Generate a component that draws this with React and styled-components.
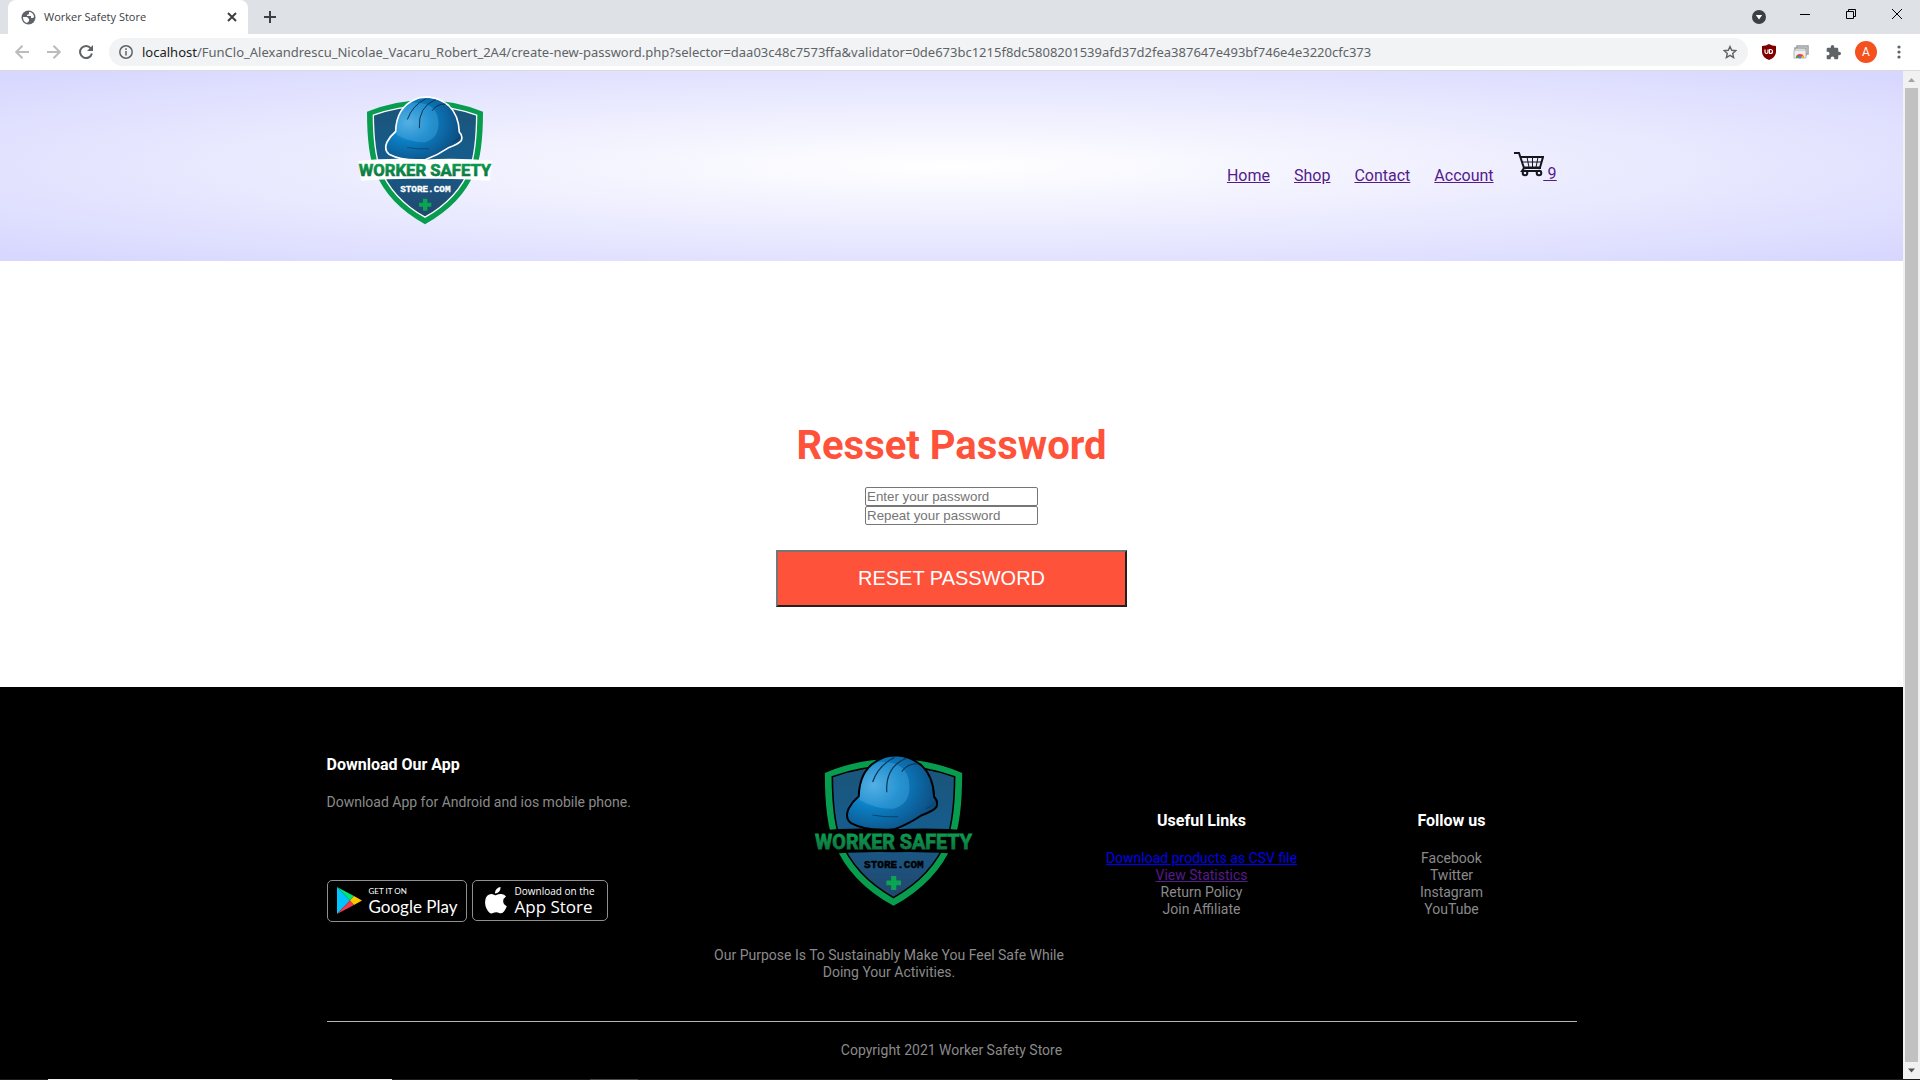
import React from "react";
import styled, { createGlobalStyle } from "styled-components";

const GlobalStyle = createGlobalStyle`
  * { box-sizing: border-box; margin: 0; padding: 0; }
  body { font-family: Roboto, "Liberation Sans", sans-serif; background: #fff; }
  ul { list-style: none; }
  svg { display: block; flex: none; }
`;

const Window = styled.div`
  min-height: 100vh;
  display: flex;
  flex-direction: column;
`;

/* Browser frame */
const TitleBar = styled.div`
  height: 34px;
  background: #dee1e6;
  display: flex;
  justify-content: space-between;
  padding: 0 8px;
  font-family: "Open Sans", sans-serif;
`;
const TabStrip = styled.div`
  display: flex;
  align-items: center;
  gap: 12px;
`;
const Tab = styled.div`
  width: 240px;
  height: 34px;
  padding: 0 8px 0 13px;
  display: flex;
  align-items: center;
  gap: 8px;
  border-radius: 8px 8px 0 0;
  background: #fff;
  color: #3c4043;
`;
const TabTitle = styled.span`
  flex: 1;
  font-size: 11px;
  line-height: 16px;
`;
const IconButton = styled.button`
  width: ${(p) => p.$size || 20}px;
  height: ${(p) => p.$size || 20}px;
  flex: none;
  display: flex;
  align-items: center;
  justify-content: center;
  border: 0;
  background: none;
  color: ${(p) => p.$color || "#5f6368"};
`;
const WindowControls = styled.div`
  display: flex;
  align-items: center;
  height: 28px;
  gap: 26px;
  padding-right: 5px;
`;
const Dropper = styled.div`
  padding-top: 6px;
`;
const Toolbar = styled.div`
  height: 37px;
  display: flex;
  align-items: center;
  gap: 12px;
  padding: 0 11px 0 12px;
  background: #fff;
  border-bottom: 1px solid #d9dbde;
`;
const AddressBar = styled.div`
  flex: 1;
  min-width: 0;
  height: 28px;
  margin: 0 -1px 0 1px;
  padding: 0 8px 0 10px;
  display: flex;
  align-items: center;
  gap: 9px;
  border-radius: 14px;
  background: #f1f3f4;
  color: #5f6368;
`;
const Url = styled.span`
  flex: 1;
  overflow: hidden;
  white-space: nowrap;
  font-family: "Noto Sans", sans-serif;
  font-size: 13px;
  line-height: 20px;
`;
const Host = styled.span`
  color: #202124;
`;
const Avatar = styled.span`
  width: 22px;
  height: 22px;
  flex: none;
  border-radius: 50%;
  background: #f4511e;
  color: #fff;
  font-size: 12px;
  line-height: 22px;
  text-align: center;
`;
const Viewport = styled.div`
  flex: 1;
  display: flex;
`;
const Page = styled.div`
  flex: 1;
  min-width: 0;
  display: flex;
  flex-direction: column;
`;
const ScrollTrack = styled.div`
  width: 17px;
  display: flex;
  flex-direction: column;
  align-items: center;
  background: #f1f1f1;
`;
const ScrollThumb = styled.div`
  flex: 1;
  width: 13px;
  background: #c1c1c1;
`;
const Taskbar = styled.div`
  height: 2px;
  display: flex;
  gap: 198px;
  padding-left: 48px;
  background: #1b1b1b;
`;
const TaskItem = styled.div`
  width: ${(p) => p.$width}px;
  background: ${(p) => p.$color};
`;

/* Page */
const Container = styled.div`
  width: 100%;
  max-width: 1300px;
  margin: 0 auto;
  padding: 0 25px;
`;
const Header = styled.header`
  background: radial-gradient(#fff, #d6d6ff);
`;
const NavBar = styled(Container)`
  height: 190px;
  display: flex;
  align-items: flex-start;
  justify-content: space-between;
  padding: 25px 45px 0 55px;
`;
const Nav = styled.nav`
  display: flex;
  align-items: flex-end;
  gap: 20px;
  margin-top: 53px;
`;
const NavList = styled.ul`
  display: flex;
  gap: 24px;
`;
const NavLink = styled.a`
  color: #551a8b;
  font-size: 16px;
  line-height: 19px;
  text-decoration: underline;
`;
const CartLink = styled(NavLink)`
  display: flex;
  align-items: flex-start;
  white-space: pre;
  padding-bottom: 2px;
`;
const CartCount = styled.span`
  padding-top: 15px;
  text-decoration: underline;
`;

const Main = styled.main`
  flex: 1;
  padding: 161px 25px 80px;
  text-align: center;
`;
const Title = styled.h1`
  color: #ff523b;
  font-size: 40px;
  line-height: 47px;
  font-weight: 700;
`;
const Form = styled.form`
  display: flex;
  flex-direction: column;
  align-items: center;
  margin-top: 18px;
`;
const Field = styled.input`
  width: 173px;
  height: 19px;
  border: 1px solid #767676;
  border-radius: 2px;
  padding: 0 1px;
  font-family: "Liberation Sans", Arial, sans-serif;
  &::placeholder { color: #757575; }
`;
const Submit = styled.button`
  width: 351px;
  max-width: 100%;
  margin-top: 25px;
  padding: 15px 30px;
  border: 2px solid;
  border-color: #767676 #212121 #212121 #767676;
  background: #ff523b;
  color: #fff;
  font: 20px/23px "Liberation Sans", Arial, sans-serif;
`;

const Footer = styled.footer`
  background: #000;
  color: #8a8a8a;
  font-size: 14px;
  line-height: 17px;
  padding: 60px 0 20px;
`;
const FooterRow = styled.div`
  display: grid;
  grid-template-columns: 3fr 3fr 2fr 2fr;
  align-items: center;
`;
const Column = styled.div`
  text-align: ${(p) => p.$align || "center"};
`;
const FooterTitle = styled.h3`
  color: #fff;
  font-size: 16px;
  line-height: 19px;
  font-weight: 700;
  margin-bottom: 20px;
`;
const FooterLink = styled.a`
  color: ${(p) => p.$color};
`;
const Badges = styled.div`
  display: flex;
  align-items: center;
  gap: 5px;
  margin: 69px 0 52px;
`;
const Badge = styled.a`
  height: ${(p) => p.$height}px;
  width: ${(p) => p.$width}px;
  display: flex;
  align-items: center;
  gap: ${(p) => p.$gap}px;
  padding-left: ${(p) => p.$pad}px;
  border: 1px solid #8f8f8f;
  border-radius: 5px;
  color: #fff;
  text-decoration: none;
  white-space: nowrap;
  font-family: ${(p) => p.$font};
`;
const BadgeText = styled.span`
  display: flex;
  flex-direction: column;
`;
const Small = styled.span`
  font-size: ${(p) => p.$size}px;
  line-height: 12px;
  font-weight: ${(p) => p.$weight || 400};
`;
const Large = styled.span`
  font-size: ${(p) => p.$size}px;
  line-height: 20px;
  font-weight: ${(p) => p.$weight || 400};
`;
const LogoHolder = styled.div`
  display: flex;
  justify-content: center;
  padding: 7px 0 40px 8px;
`;
const Purpose = styled.p`
  max-width: 375px;
  padding: 0 10px;
`;
const Rule = styled.hr`
  border: 0;
  height: 1px;
  background: #b5b5b5;
  margin: 40px 0 20px;
`;
const Copyright = styled.p`
  text-align: center;
`;

function Logo({ id, width, height, edge }) {
  return (
    <svg width={width} height={height} viewBox="52 50 408 386" role="img" aria-label="Worker Safety Store.com">
      <defs>
        <linearGradient id={`${id}-shield`} x1="0" y1="0" x2="0" y2="1">
          <stop offset="0" stopColor="#1b5479" />
          <stop offset=".5" stopColor="#155d8d" />
          <stop offset="1" stopColor="#23476d" />
        </linearGradient>
        <radialGradient id={`${id}-hat`} cx=".3" cy=".4" r=".72">
          <stop offset="0" stopColor="#4aa9e0" />
          <stop offset=".42" stopColor="#0b7fc4" />
          <stop offset="1" stopColor="#0d4b7e" />
        </radialGradient>
        <linearGradient id={`${id}-word`} gradientUnits="userSpaceOnUse" x1="0" y1="250" x2="0" y2="310">
          <stop offset="0" stopColor="#0a9f50" />
          <stop offset="1" stopColor="#12603b" />
        </linearGradient>
      </defs>
      <path d="M82 97Q164 62 256 62Q348 62 430 97Q430 222 406 276Q366 374 256 434Q146 374 106 276Q82 222 82 97Z" fill="#089d4e" />
      <path d="M101 107Q174 80 256 79Q338 80 411 107Q410 214 391 266Q354 358 256 413Q158 358 121 266Q102 214 101 107Z" fill={`url(#${id}-shield)`} stroke={edge} strokeWidth="4" />
      <path d="M168 156Q170 84 226 60Q240 52 268 53Q300 56 327 78Q357 106 359 158Q370 168 365 183Q358 193 326 205Q294 227 258 240Q190 246 148 224Q132 211 142 188Q152 169 168 156Z" fill={`url(#${id}-hat)`} stroke={edge} strokeWidth="5" />
      <path d="M171 166Q168 96 216 70Q282 66 294 112Q306 174 256 188Q212 190 171 166Z" fill="#6cc1ef" opacity=".28" />
      <path d="M203 120Q218 78 258 58M239 146Q235 82 288 60M277 94Q292 72 318 74" fill="none" stroke="#0a3354" strokeWidth="3" />
      <path d="M203 204Q234 210 268 208M338 188Q354 182 360 172" fill="none" stroke="#083963" strokeWidth="2" />
      <path d="M56 244Q150 234 256 240Q360 234 458 244L450 304Q350 296 256 298Q160 296 64 304Z" fill={edge} />
      <text x="256" y="289" fill={`url(#${id}-word)`} stroke={`url(#${id}-word)`} strokeWidth="2" fontFamily="Roboto, sans-serif" fontWeight="700" fontSize="50" textAnchor="middle">WORKER SAFETY</text>
      <text x="257" y="337" fill={edge} stroke={edge} strokeWidth="1" fontFamily="'Liberation Mono', monospace" fontWeight="700" fontSize="28" textAnchor="middle">STORE.COM</text>
      <path d="M250 358h13v12h12v12h-12v12h-13v-12h-12v-12h12Z" fill="#0aa551" />
    </svg>
  );
}

const Line = ({ size, d, width = 2, box = size }) => (
  <svg width={size} height={size} viewBox={`0 0 ${box} ${box}`} fill="none" stroke="currentColor" strokeWidth={width}>
    <path d={d} />
  </svg>
);

const Globe = () => (
  <svg width="15" height="15" viewBox="0 0 15 15">
    <circle cx="7.5" cy="7.5" r="7" fill="#5f6368" />
    <path d="M2 7h4l2 2v2l-2 2C3.500 12.500 1.800 10 2 7ZM8 2v2L6 5v1h4v2h2l1-1C13 4 10.500 2 8 2Z" fill="#fff" />
  </svg>
);

const Cart = () => (
  <svg width="30" height="30" viewBox="0 0 30 30" fill="none" stroke="#17151c" strokeWidth="2">
    <path d="M0 4h5l5 15h17M6.500 8H29l-3 10.500H10" />
    <path d="M8 13h20M13 8l2 10.500M18.500 8v10.500M24 8l-2 10.500" strokeWidth="1" />
    <path d="M10 19l-2 3h18" />
    <circle cx="11" cy="24" r="2.300" />
    <circle cx="25" cy="24" r="2.300" />
  </svg>
);

export default function App() {
  return (
    <Window>
      <GlobalStyle />
      <TitleBar>
        <TabStrip>
          <Tab>
            <Globe />
            <TabTitle>Worker Safety Store</TabTitle>
            <IconButton $size={16} $color="#3c4043" aria-label="Close tab"><Line size={10} d="M1 1l8 8M9 1l-8 8" /></IconButton>
          </Tab>
          <IconButton $color="#3c4043" aria-label="New tab"><Line size={12} d="M6 0v12M0 6h12" /></IconButton>
        </TabStrip>
        <WindowControls>
          <Dropper>
            <IconButton aria-label="Search tabs">
              <svg width="14" height="14" viewBox="0 0 14 14"><circle cx="7" cy="7" r="7" fill="#3c4043" /><path d="M3.800 5h6.400L7 9.500Z" fill="#fff" /></svg>
            </IconButton>
          </Dropper>
          <IconButton $color="#000" aria-label="Minimize"><Line size={10} width={1} d="M0 5.500h10" /></IconButton>
          <IconButton $color="#000" aria-label="Restore"><Line size={10} width={1} d="M.5 2.500h7v7h-7zM2.500 2.500v-2h7v7h-2" /></IconButton>
          <IconButton $color="#000" aria-label="Close"><Line size={10} width={1} d="M0 0l10 10M10 0L0 10" /></IconButton>
        </WindowControls>
      </TitleBar>
      <Toolbar>
        <IconButton $color="#babcbe" aria-label="Back"><Line size={14} d="M14 7H1.500M7.500 .7L1.200 7l6.300 6.300" /></IconButton>
        <IconButton $color="#babcbe" aria-label="Forward"><Line size={14} d="M0 7h12.500M6.500 .7L12.800 7l-6.300 6.300" /></IconButton>
        <IconButton aria-label="Reload">
          <svg width="14" height="14" viewBox="0 0 14 14"><path d="M11.800 3.300A6 6 0 1 0 12.900 8.500" fill="none" stroke="currentColor" strokeWidth="2" /><path d="M14 0v6H8Z" fill="currentColor" /></svg>
        </IconButton>
        <AddressBar>
          <svg width="14" height="14" viewBox="0 0 14 14" fill="none" stroke="currentColor" strokeWidth="1.500"><circle cx="7" cy="7" r="6.200" /><path d="M7 6v4.500M7 3.300v1.700" /></svg>
          <Url><Host>localhost</Host>/FunClo_Alexandrescu_Nicolae_Vacaru_Robert_2A4/create-new-password.php?selector=daa03c48c7573ffa&amp;validator=0de673bc1215f8dc5808201539afd37d2fea387647e493bf746e4e3220cfc373</Url>
          <IconButton aria-label="Bookmark this page"><Line size={14} box={14} width={1.4} d="M7 1.500l1.700 3.800 4.100.4-3.100 2.800.9 4.100L7 10.400l-3.600 2.200.9-4.100L1.200 5.700l4.100-.4Z" /></IconButton>
        </AddressBar>
        <IconButton aria-label="Ad blocker">
          <svg width="14" height="16" viewBox="0 0 14 16"><path d="M7 0Q10 2 14 2V8Q14 13 7 16Q0 13 0 8V2Q4 2 7 0Z" fill="#800000" /><path d="M3 5.500V8a1.500 1.500 0 0 0 3 0V5.500M7.500 5.500v4h1a2 2 0 0 0 0-4Z" fill="none" stroke="#fff" strokeWidth="1.200" /></svg>
        </IconButton>
        <IconButton aria-label="Remote desktop">
          <svg width="16" height="14" viewBox="0 0 16 14"><path d="M4 3V1h11v8h-2M2 6V3h11v8" fill="none" stroke="#9a9da0" strokeWidth="1.500" /><path d="M1 5h12v8H1Z" fill="#eee" stroke="#b4b6b8" /><path d="M3 13a4 4 0 0 1 8 0Z" fill="#ea4335" /><path d="M3 13l1-2.800L7 13Z" fill="#34a853" /><path d="M11 13l-1-2.800L7 13Z" fill="#fbbc05" /><circle cx="7" cy="12" r="1.500" fill="#4285f4" /></svg>
        </IconButton>
        <IconButton aria-label="Extensions">
          <svg width="15" height="15" viewBox="1 1 22 22"><path fill="currentColor" d="M20.500 11H19V7c0-1.100-.9-2-2-2h-4V3.500a2.500 2.500 0 0 0-5 0V5H4c-1.100 0-2 .9-2 2v3.800h1.500a2.700 2.700 0 0 1 0 5.400H2V20c0 1.100.9 2 2 2h3.800v-1.500a2.700 2.700 0 0 1 5.400 0V22H17c1.100 0 2-.9 2-2v-4h1.500a2.500 2.500 0 0 0 0-5Z" /></svg>
        </IconButton>
        <Avatar>A</Avatar>
        <IconButton aria-label="Menu"><svg width="4" height="14" viewBox="0 0 4 14" fill="currentColor"><circle cx="2" cy="2" r="1.600" /><circle cx="2" cy="7" r="1.600" /><circle cx="2" cy="12" r="1.600" /></svg></IconButton>
      </Toolbar>

      <Viewport>
        <Page>
          <Header>
            <NavBar>
              <Logo id="top" width={136} height={129} edge="#fff" />
              <Nav>
                <NavList>
                  {["Home", "Shop", "Contact", "Account"].map((name) => (
                    <li key={name}><NavLink href="#">{name}</NavLink></li>
                  ))}
                </NavList>
                <CartLink href="#"><Cart /><CartCount> 9</CartCount></CartLink>
              </Nav>
            </NavBar>
          </Header>

          <Main>
            <Title>Resset Password</Title>
            <Form>
              <Field type="password" placeholder="Enter your password" aria-label="Enter your password" />
              <Field type="password" placeholder="Repeat your password" aria-label="Repeat your password" />
              <Submit type="button">RESET PASSWORD</Submit>
            </Form>
          </Main>

          <Footer>
            <Container>
              <FooterRow>
                <Column $align="left">
                  <FooterTitle>Download Our App</FooterTitle>
                  <p>Download App for Android and ios mobile phone.</p>
                  <Badges>
                    <Badge href="#" $width={140} $height={42} $pad={9} $gap={7} $font="Lato, sans-serif">
                      <svg width="25" height="27" viewBox="0 0 25 27"><path d="M0 0V27L13 13.500Z" fill="#00c3ff" /><path d="M0 0L17 9l-4 4.500Z" fill="#00e676" /><path d="M0 27l17-9-4-4.500Z" fill="#f23b4c" /><path d="M17 9l8 4.500L17 18l-4-4.500Z" fill="#ffc900" /></svg>
                      <BadgeText><Small $size={8}>GET IT ON</Small><Large $size={17}>Google Play</Large></BadgeText>
                    </Badge>
                    <Badge href="#" $width={136} $height={41} $pad={12} $gap={8} $font="'Open Sans', sans-serif">
                      <svg width="22" height="27" viewBox="0 0 22 27" fill="#fff"><path d="M15.500 0q.3 3-1.500 4.800T10 6.600Q9.800 4 11.600 2.100T15.500 0ZM10.800 8.200Q14 6.600 16.500 7q3 .4 4.500 2.600-3 2-2.800 5t3.600 4.600q-1 2.800-2.600 5T16 26.300q-1.200 0-2.400-.6t-2.600-.5q-1.200 0-2.400.6t-2.400.6Q3.600 26 1.600 21.800T.2 14q.2-3.400 2-5.200T6.400 7q1.400.1 2.600.7t1.800.5Z" /></svg>
                      <BadgeText><Small $size={10} $weight={500}>Download on the</Small><Large $size={17} $weight={500}>App Store</Large></BadgeText>
                    </Badge>
                  </Badges>
                </Column>
                <Column>
                  <LogoHolder><Logo id="bottom" width={161} height={153} edge="#000" /></LogoHolder>
                  <Purpose>Our Purpose Is To Sustainably Make You Feel Safe While Doing Your Activities.</Purpose>
                </Column>
                <Column>
                  <FooterTitle>Useful Links</FooterTitle>
                  <ul>
                    <li><FooterLink href="#" $color="#0000ee">Download products as CSV file</FooterLink></li>
                    <li><FooterLink href="#" $color="#551a8b">View Statistics</FooterLink></li>
                    <li>Return Policy</li>
                    <li>Join Affiliate</li>
                  </ul>
                </Column>
                <Column>
                  <FooterTitle>Follow us</FooterTitle>
                  <ul>
                    <li>Facebook</li>
                    <li>Twitter</li>
                    <li>Instagram</li>
                    <li>YouTube</li>
                  </ul>
                </Column>
              </FooterRow>
              <Rule />
              <Copyright>Copyright 2021 Worker Safety Store</Copyright>
            </Container>
          </Footer>
        </Page>
        <ScrollTrack>
          <svg width="17" height="17" viewBox="0 0 17 17"><path d="M5 11h7L8.500 7Z" fill="#a3a3a3" /></svg>
          <ScrollThumb />
          <svg width="17" height="17" viewBox="0 0 17 17"><path d="M5 6.500h7l-3.500 4Z" fill="#505050" /></svg>
        </ScrollTrack>
      </Viewport>
      <Taskbar>
        <TaskItem $width={344} $color="#f3f3f3" />
        <TaskItem $width={48} $color="#4a4a4a" />
      </Taskbar>
    </Window>
  );
}
